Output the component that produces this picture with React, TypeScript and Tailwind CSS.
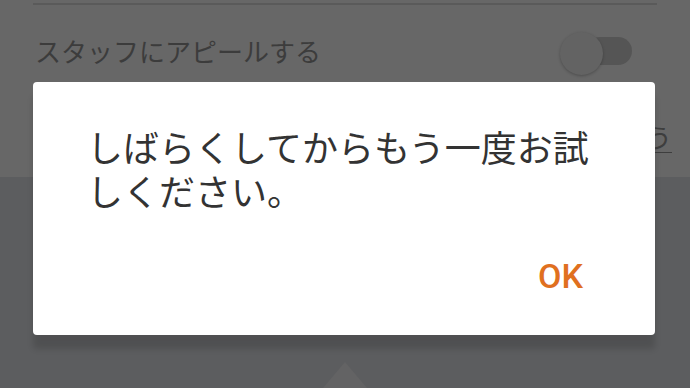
import React from 'react';

function Toggle() {
  return (
    <div className="relative h-[43px] w-[72px]">
      <div className="absolute right-0 top-[5px] h-[28px] w-[46px] rounded-full bg-[#555555]" />
      <div className="absolute left-0 top-0 size-[43px] rounded-full bg-[#636363] shadow-[0_1px_3px_rgba(0,0,0,0.25)]" />
    </div>
  );
}

export default function App() {
  return (
    <div className="relative flex h-[388px] w-[690px] flex-col overflow-hidden bg-[#5c5d5f] font-['Noto_Sans_CJK_JP','Noto_Sans',sans-serif]">
      {/* dimmed settings page */}
      <div className="h-[177px] bg-[#676767] pt-[3px]">
        <div className="mx-[33px] h-[2px] bg-[#5a5a5a]" />
        <div className="flex h-[96px] items-center justify-between pl-[35px] pr-[58px]">
          <span className="mb-[4px] text-[26px] leading-[36px] text-[#3c3c3c]">スタッフにアピールする</span>
          <Toggle />
        </div>
        <div className="mt-[18px] flex justify-end pr-[18px]">
          <span className="text-[26px] leading-[36px] text-[#3e3e3e] underline decoration-1 underline-offset-[4px]">見よう</span>
        </div>
      </div>
      <div className="flex flex-1 items-end justify-center">
        <svg width="48" height="26" viewBox="0 0 48 26" aria-hidden="true">
          <path d="M24 0 L46 26 L2 26 Z" fill="#636364" />
        </svg>
      </div>

      {/* dialog */}
      <div className="absolute left-[33px] top-[82px] h-[253px] w-[622px] rounded-[4px] bg-white pl-[54px] pr-[54px] pt-[42px] shadow-[0_14px_6px_rgba(0,0,0,0.14)]">
        <p className="text-[36px] leading-[44px] text-[#333333]">しばらくしてからもう一度お試しください。</p>
        <div className="mt-[47px] flex justify-end pr-[18px]">
          <button className="font-['Roboto',sans-serif] text-[34px] font-medium leading-none text-[#e0701f]">OK</button>
        </div>
      </div>
    </div>
  );
}
